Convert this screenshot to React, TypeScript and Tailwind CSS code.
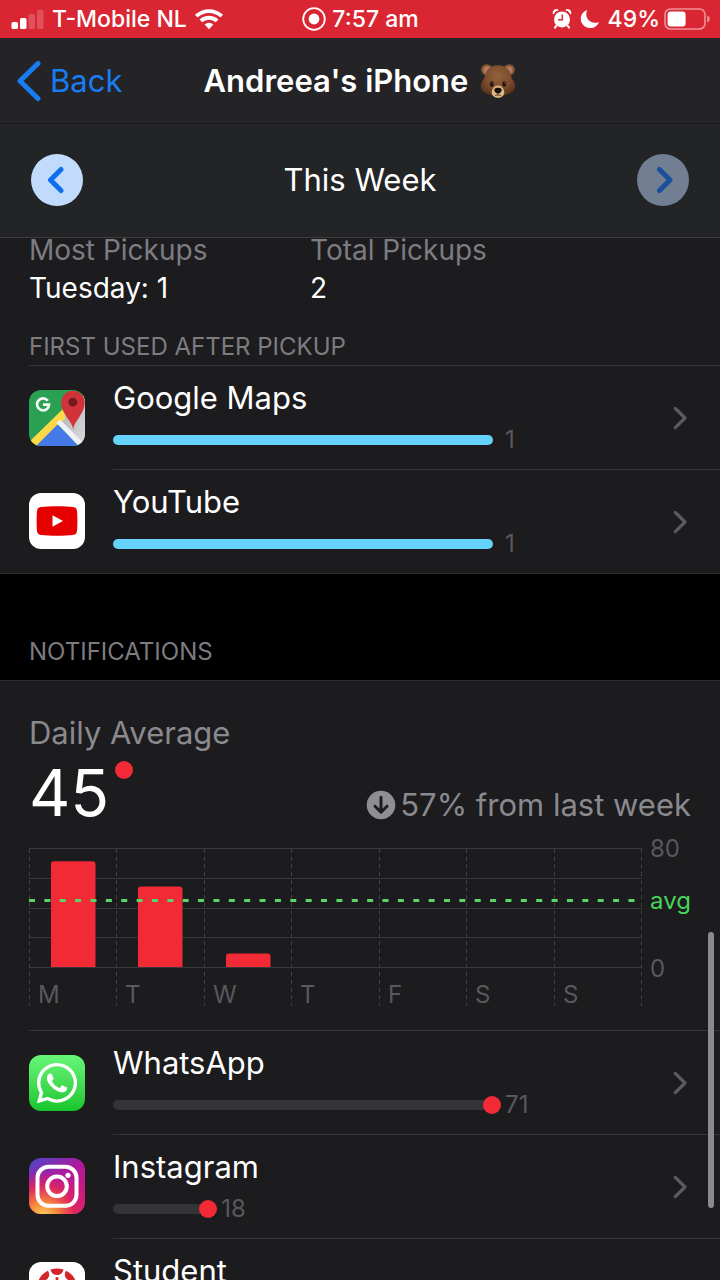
import React from "react";
import { FaWhatsapp } from "react-icons/fa";

type Usage = {
  name: string;
  value: number;
  icon: React.ReactNode;
};

function SignalIcon() {
  return (
    <svg width="34" height="22" viewBox="0 0 34 22" fill="#fff" aria-hidden="true">
      <rect x="0.5" y="14" width="6.5" height="7" rx="1.6" />
      <rect x="9" y="10" width="6.5" height="11" rx="1.6" />
      <rect x="17.5" y="6" width="6.5" height="15" rx="1.6" opacity="0.2" />
      <rect x="26" y="2" width="6.5" height="19" rx="1.6" opacity="0.2" />
    </svg>
  );
}

function WifiIcon() {
  return (
    <svg width="30" height="22" viewBox="0 0 30 22" aria-hidden="true">
      <g fill="none" stroke="#fff" strokeWidth="3.9">
        <path d="M2.3 8.2a18.4 18.4 0 0 1 25.4 0" />
        <path d="M6.9 12.9a11.8 11.8 0 0 1 16.2 0" />
      </g>
      <path d="M10.6 16.6a6.4 6.4 0 0 1 8.8 0L15 21.2z" fill="#fff" />
    </svg>
  );
}

function RecordIcon() {
  return (
    <svg width="24" height="24" viewBox="0 0 24 24" aria-hidden="true">
      <circle cx="12" cy="12" r="10.8" fill="none" stroke="#fff" strokeWidth="1.8" />
      <circle cx="12" cy="12" r="5.4" fill="#fff" />
    </svg>
  );
}

function AlarmIcon() {
  return (
    <svg width="20" height="20" viewBox="0 0 20 20" aria-hidden="true">
      <g stroke="#fff" strokeLinecap="round">
        <path d="M4.6 16.4 3 18.6M15.4 16.4l1.6 2.2" strokeWidth="2" />
        <path d="M1.5 4.4a3 3 0 0 1 4-3.3M18.500 4.400a3 3 0 0 0-4-3.300" fill="#fff" strokeWidth="1.6" />
      </g>
      <circle cx="10" cy="10.4" r="8" fill="#fff" />
      <path d="M10.3 5.6v5.2H6" fill="none" stroke="#dc2733" strokeWidth="1.5" />
    </svg>
  );
}

function MoonIcon() {
  return (
    <svg width="20" height="20" viewBox="0 0 20 20" aria-hidden="true">
      <path d="M7.2 1C2.8 2.500.8 6 .8 9.800c0 5.200 4.100 9.200 9.300 9.200 4.100 0 7.500-2.400 8.900-6.100-1.300.6-2.700.8-4 .8-5 0-8.700-3.600-8.700-8.400 0-1.500.300-3 .9-4.300z" fill="#fff" />
    </svg>
  );
}

function BatteryIcon() {
  return (
    <svg width="46" height="22" viewBox="0 0 46 22" aria-hidden="true">
      <rect x="1" y="1" width="40" height="20" rx="5.500" fill="none" stroke="#fff" strokeOpacity="0.5" strokeWidth="1.600" />
      <rect x="3.600" y="3.600" width="18" height="14.800" rx="3" fill="#fff" />
      <path d="M43.200 7.500c2 .9 2.600 2.200 2.600 3.500s-.6 2.600-2.600 3.500z" fill="#fff" opacity="0.5" />
    </svg>
  );
}

function BearIcon() {
  return (
    <svg width="36" height="36" viewBox="0 0 36 36" role="img" aria-label="Bear">
      <defs>
        <radialGradient id="bear-face" cx="0.5" cy="0.35" r="0.65">
          <stop offset="0" stopColor="#93633e" />
          <stop offset="0.6" stopColor="#7b4b2c" />
          <stop offset="1" stopColor="#56311b" />
        </radialGradient>
      </defs>
      <circle cx="6.800" cy="6.800" r="5.600" fill="#8a5733" />
      <circle cx="29.200" cy="6.800" r="5.600" fill="#8a5733" />
      <circle cx="7.300" cy="7.300" r="3.700" fill="#b27d60" />
      <circle cx="28.700" cy="7.300" r="3.700" fill="#b27d60" />
      <path d="M18 2.200c7.500 0 12.400 4.600 13.300 11.300.5 3.300 3.900 5 3.900 9.300 0 5.500-4.500 7.900-9.200 8.700-3 .6-5 3-8 3s-5-2.400-8-3C5.300 30.700.8 28.300.8 22.800c0-4.300 3.400-6 3.900-9.300C5.600 6.800 10.500 2.200 18 2.200z" fill="url(#bear-face)" />
      <path d="M18 22.500c3.500 0 6.300 3.600 6.300 6.900 0 3.100-3 5.400-6.300 5.400s-6.300-2.300-6.300-5.400c0-3.300 2.800-6.900 6.300-6.900z" fill="#dcb882" />
      <path d="M14.300 27c0-1.600 1.700-2.200 3.700-2.200s3.700.6 3.700 2.200c0 1.700-2.300 3.700-3.700 3.700s-3.700-2-3.700-3.700z" fill="#17100c" />
      <path d="M18 30.500v1.200M15.200 32.500q2.800-1.300 5.600 0" stroke="#4c2c19" strokeWidth="0.900" fill="none" />
      <ellipse cx="11.800" cy="21" rx="1.800" ry="2.700" fill="#1b100a" />
      <ellipse cx="24.200" cy="21" rx="1.800" ry="2.700" fill="#1b100a" />
      <circle cx="12" cy="20" r="0.600" fill="#a98d7a" />
      <circle cx="24.400" cy="20" r="0.600" fill="#a98d7a" />
    </svg>
  );
}

function MapsIcon() {
  return (
    <svg width="56" height="56" viewBox="0 0 56 56" aria-hidden="true">
      <defs>
        <clipPath id="maps-tile">
          <rect width="56" height="56" rx="12" />
        </clipPath>
        <linearGradient id="maps-road" x1="0" y1="0" x2="1" y2="1">
          <stop offset="0" stopColor="#a9a9ac" />
          <stop offset="1" stopColor="#dcdcde" />
        </linearGradient>
      </defs>
      <g clipPath="url(#maps-tile)">
        <rect width="56" height="56" fill="#2aa152" />
        <path d="M28 32 56 4v52z" fill="url(#maps-road)" />
        <path d="M0 52 36 17v12L6 58z" fill="#fbd947" />
        <path d="M5 58 28.500 34.500 52 58z" fill="#4579e8" />
        <path d="m27.500 33 3.500-3.500 26 26-4 4z" fill="#eef1f7" />
      </g>
      <path d="M18.800 10.800A6 6 0 1 0 20 14.600H14" fill="none" stroke="#f3fbf5" strokeWidth="2.700" />
      <path d="M44.200 39.500c-.8-8.500-12-15.500-12-27A11.700 11.700 0 0 1 44 .8a11.700 11.700 0 0 1 11.700 11.700c0 11.500-10.700 18.500-11.500 27z" fill="#d13339" />
      <circle cx="43.800" cy="12.200" r="4.400" fill="#711b20" />
    </svg>
  );
}

function YouTubeIcon() {
  return (
    <svg width="56" height="56" viewBox="0 0 56 56" aria-hidden="true">
      <rect width="56" height="56" rx="12" fill="#fff" />
      <path d="M12 14c8-.9 24-.9 32 0 2.600.3 3.700 1.700 4 4 .5 5 .5 15 0 20-.3 2.300-1.400 3.700-4 4-8 .9-24 .9-32 0-2.600-.3-3.700-1.700-4-4-.5-5-.5-15 0-20 .3-2.300 1.400-3.700 4-4z" fill="#e60000" />
      <path d="M23.500 22.200 34 28l-10.500 5.800z" fill="#fff" />
    </svg>
  );
}

function WhatsAppIcon() {
  return (
    <span className="flex size-14 items-center justify-center rounded-xl bg-linear-to-b from-[#67f777] to-[#13c52b] text-white">
      <FaWhatsapp className="size-[46px]" aria-hidden="true" />
    </span>
  );
}

function InstagramIcon() {
  return (
    <svg width="56" height="56" viewBox="0 0 56 56" aria-hidden="true">
      <defs>
        <linearGradient id="insta-base" x1="0.2" y1="0" x2="0.8" y2="1">
          <stop offset="0" stopColor="#5b3fc4" />
          <stop offset="0.4" stopColor="#b0189a" />
          <stop offset="1" stopColor="#dd1f6b" />
        </linearGradient>
        <radialGradient id="insta-glow" cx="0.25" cy="1.05" r="0.85">
          <stop offset="0" stopColor="#fcd266" />
          <stop offset="0.3" stopColor="#f98b3c" />
          <stop offset="0.65" stopColor="#e52c55" stopOpacity="0.8" />
          <stop offset="1" stopColor="#c81b85" stopOpacity="0" />
        </radialGradient>
      </defs>
      <rect width="56" height="56" rx="12" fill="url(#insta-base)" />
      <rect width="56" height="56" rx="12" fill="url(#insta-glow)" />
      <g fill="none" stroke="#fff" strokeWidth="4">
        <rect x="8.500" y="8.800" width="39" height="39" rx="11" />
        <circle cx="28" cy="28.300" r="9.800" />
      </g>
      <circle cx="39" cy="17.300" r="2.600" fill="#fff" />
    </svg>
  );
}

function CanvasIcon() {
  const turns = [0, 45, 90, 135, 180, 225, 270, 315];
  return (
    <svg width="56" height="56" viewBox="0 0 56 56" aria-hidden="true">
      <rect width="56" height="56" rx="12" fill="#fff" />
      {turns.map((turn) => (
        <g key={turn} transform={`rotate(${turn} 28 27)`} fill="#d3262b">
          <path d="M21.500 7.600q6.500-2.300 13 0c-.5 3.400-3.200 5.400-6.500 5.400s-6-2-6.500-5.400z" />
          <circle cx="28" cy="16.600" r="1.600" />
        </g>
      ))}
    </svg>
  );
}

function ChevronRight() {
  return (
    <svg width="16" height="24" viewBox="0 0 16 24" fill="none" stroke="#5c5b5f" strokeWidth="3.200" strokeLinecap="round" strokeLinejoin="round" aria-hidden="true">
      <path d="m3.300 2.400 9.700 9.600-9.700 9.600" />
    </svg>
  );
}

const pickups: Usage[] = [
  { name: "Google Maps", value: 1, icon: <MapsIcon /> },
  { name: "YouTube", value: 1, icon: <YouTubeIcon /> },
];

const notifications: Usage[] = [
  { name: "WhatsApp", value: 71, icon: <WhatsAppIcon /> },
  { name: "Instagram", value: 18, icon: <InstagramIcon /> },
  { name: "Student", value: 12, icon: <CanvasIcon /> },
];

function UsageList({ items, dotted = false }: { items: Usage[]; dotted?: boolean }) {
  const max = Math.max(...items.map((item) => item.value));
  return (
    <ul className="pl-[29px]">
      {items.map((item, index) => (
        <li key={item.name}>
          <a href={"#" + item.name.toLowerCase().replace(" ", "-")} className="flex h-26">
            <span className={"flex w-[84px] shrink-0 items-center border-[#353438] " + (index === 0 ? "border-t" : "")}>
              {item.icon}
            </span>
            <span className="flex min-w-0 flex-1 items-center border-t border-[#353438] pr-8">
              <span className="flex h-full flex-1 flex-col pt-3.5">
                <span className="text-[31px] leading-9 text-white">{item.name}</span>
                <span className="mt-3 flex h-6 items-center">
                  <span
                    className={"relative h-2.5 rounded-full " + (dotted ? "bg-[#343336]" : "bg-[#64d2fb]")}
                    style={{ width: `${(item.value / max) * 68}%` }}
                  >
                    {dotted && <span className="absolute -top-1 -right-2 size-[18px] rounded-full bg-[#f12a36]" />}
                  </span>
                  <span className="ml-3 text-2xl leading-6 text-[#59585c]">{item.value}</span>
                </span>
              </span>
              <ChevronRight />
            </span>
          </a>
        </li>
      ))}
    </ul>
  );
}

const days = ["M", "T", "W", "T", "F", "S", "S"];
const counts = [71, 54, 9, 0, 0, 0, 0];

function WeekChart() {
  const step = 87.5;
  return (
    <svg viewBox="0 0 662 160" className="block w-full overflow-visible" role="img" aria-label="Notifications per day">
      <g stroke="#39383b" strokeWidth="1">
        {[0.5, 30.5, 60.5, 89.5, 119.5].map((y) => (
          <path key={y} d={`M0 ${y}H613`} />
        ))}
      </g>
      <g stroke="#424145" strokeWidth="1" strokeDasharray="4 3.700">
        {[0, 1, 2, 3, 4, 5, 6, 7].map((i) => (
          <path key={i} d={`M${Math.floor(i * step) + 0.5} 1V158`} />
        ))}
      </g>
      <g fill="#f12a36">
        {counts.map((count, i) => {
          if (count === 0) return null;
          const x = Math.floor(i * step) + 22;
          const top = 119 - count * 1.49;
          return <path key={i} d={`M${x} 119V${top + 3}q0-3 3-3h38.500q3 0 3 3V119z`} />;
        })}
      </g>
      <path d="M0 52.500H608" stroke="#5bd566" strokeWidth="3" strokeDasharray="6 9.370" />
      <g className="text-2xl" fill="#59585c">
        {days.map((day, i) => (
          <text key={i} x={Math.floor(i * step) + 9} y="155">{day}</text>
        ))}
        <text x="621" y="9">80</text>
        <text x="621" y="129">0</text>
        <text x="621" y="61" fill="#45d35b">avg</text>
      </g>
    </svg>
  );
}

export default function App() {
  return (
    <div className="relative flex h-screen flex-col overflow-hidden bg-[#1c1b1e] font-['Inter',sans-serif] text-white">
      <div className="grid h-[38px] shrink-0 grid-cols-[1fr_auto_1fr] items-center bg-[#d92632] pr-2.5 pl-[11px] text-[23px] leading-7 font-medium">
        <div className="flex items-center gap-[7px]">
          <SignalIcon />
          <span>T-Mobile NL</span>
          <WifiIcon />
        </div>
        <div className="flex items-center gap-1.5">
          <RecordIcon />
          <span>7:57 am</span>
        </div>
        <div className="flex items-center justify-end gap-2">
          <AlarmIcon />
          <MoonIcon />
          <span className="flex items-center gap-1">
            49%
            <BatteryIcon />
          </span>
        </div>
      </div>

      <header className="grid h-[86px] shrink-0 grid-cols-[1fr_auto_1fr] items-center border-b border-[#19191b] bg-[#242426] px-4">
        <button type="button" className="flex items-center gap-2 justify-self-start text-[31px] leading-9 text-[#197cf3]">
          <svg width="26" height="42" viewBox="0 0 26 42" fill="none" stroke="currentColor" strokeWidth="5" strokeLinecap="round" strokeLinejoin="round" aria-hidden="true">
            <path d="M22 3.500 4 21l18 17.500" />
          </svg>
          Back
        </button>
        <h1 className="flex items-center gap-3 text-[31px] leading-9 font-semibold">
          Andreea's iPhone
          <BearIcon />
        </h1>
      </header>

      <nav aria-label="Week" className="flex h-[114px] shrink-0 items-center justify-between border-b border-[#3c3c3e] bg-[#222426] px-[31px] pb-0.5">
        <button type="button" aria-label="Previous week" className="flex size-[52px] items-center justify-center rounded-full bg-[#c2dafc] text-[#0f6fee]">
          <svg width="20" height="30" viewBox="0 0 20 30" fill="none" stroke="currentColor" strokeWidth="5" strokeLinecap="round" strokeLinejoin="round" aria-hidden="true">
            <path d="M14 4.500 3.500 15 14 25.500" />
          </svg>
        </button>
        <h2 className="text-[31px] leading-9">This Week</h2>
        <button type="button" aria-label="Next week" className="flex size-[52px] items-center justify-center rounded-full bg-[#727f92] text-[#1a4f9b]">
          <svg width="20" height="30" viewBox="0 0 20 30" fill="none" stroke="currentColor" strokeWidth="5" strokeLinecap="round" strokeLinejoin="round" aria-hidden="true">
            <path d="M6.500 4.500 17 15 6.500 25.500" />
          </svg>
        </button>
      </nav>

      <main className="min-h-0 flex-1">
        <section>
          <dl className="flex px-[29px] text-[28px]">
            <div className="w-[281px]">
              <dt className="leading-6 text-[#7d7c80]">Most Pickups</dt>
              <dd className="mt-2 leading-9">Tuesday: 1</dd>
            </div>
            <div>
              <dt className="leading-6 text-[#7d7c80]">Total Pickups</dt>
              <dd className="mt-2 leading-9">2</dd>
            </div>
          </dl>
          <h3 className="mt-[25px] mb-0.5 px-[29px] text-2xl leading-8 text-[#7d7c80]">FIRST USED AFTER PICKUP</h3>
          <UsageList items={pickups} />
        </section>

        <section>
          <h3 className="border-y border-[#2f2e32] bg-black px-[29px] pt-[62px] pb-3 text-2xl leading-8 text-[#7d7c80]">NOTIFICATIONS</h3>
          <div className="px-[29px] pt-[34px]">
            <p className="text-[31px] leading-9 text-[#8a898e]">Daily Average</p>
            <div className="flex items-end justify-between">
              <p className="flex items-start gap-1.5 pt-2 text-[64px] leading-[68px]">
                45
                <span className="mt-0.5 size-[18px] rounded-full bg-[#f12a36]" />
              </p>
              <p className="flex items-center gap-1 pb-1 text-[31px] leading-9 text-[#8a898e]">
                <svg width="30" height="30" viewBox="0 0 30 30" aria-hidden="true">
                  <circle cx="15" cy="15" r="14.300" fill="#8f8e93" />
                  <path d="M15 7.300v14M9 16.200l6 6 6-6" fill="none" stroke="#1c1b1e" strokeWidth="3" strokeLinecap="round" strokeLinejoin="round" />
                </svg>
                57% from last week
              </p>
            </div>
          </div>
          <div className="px-[29px] pt-[21px] pb-[22px]">
            <WeekChart />
          </div>
          <UsageList items={notifications} dotted />
        </section>
      </main>

      <div className="absolute right-1.5 bottom-[72px] h-[276px] w-1.5 rounded-full bg-[#8a898d]" aria-hidden="true" />
    </div>
  );
}
